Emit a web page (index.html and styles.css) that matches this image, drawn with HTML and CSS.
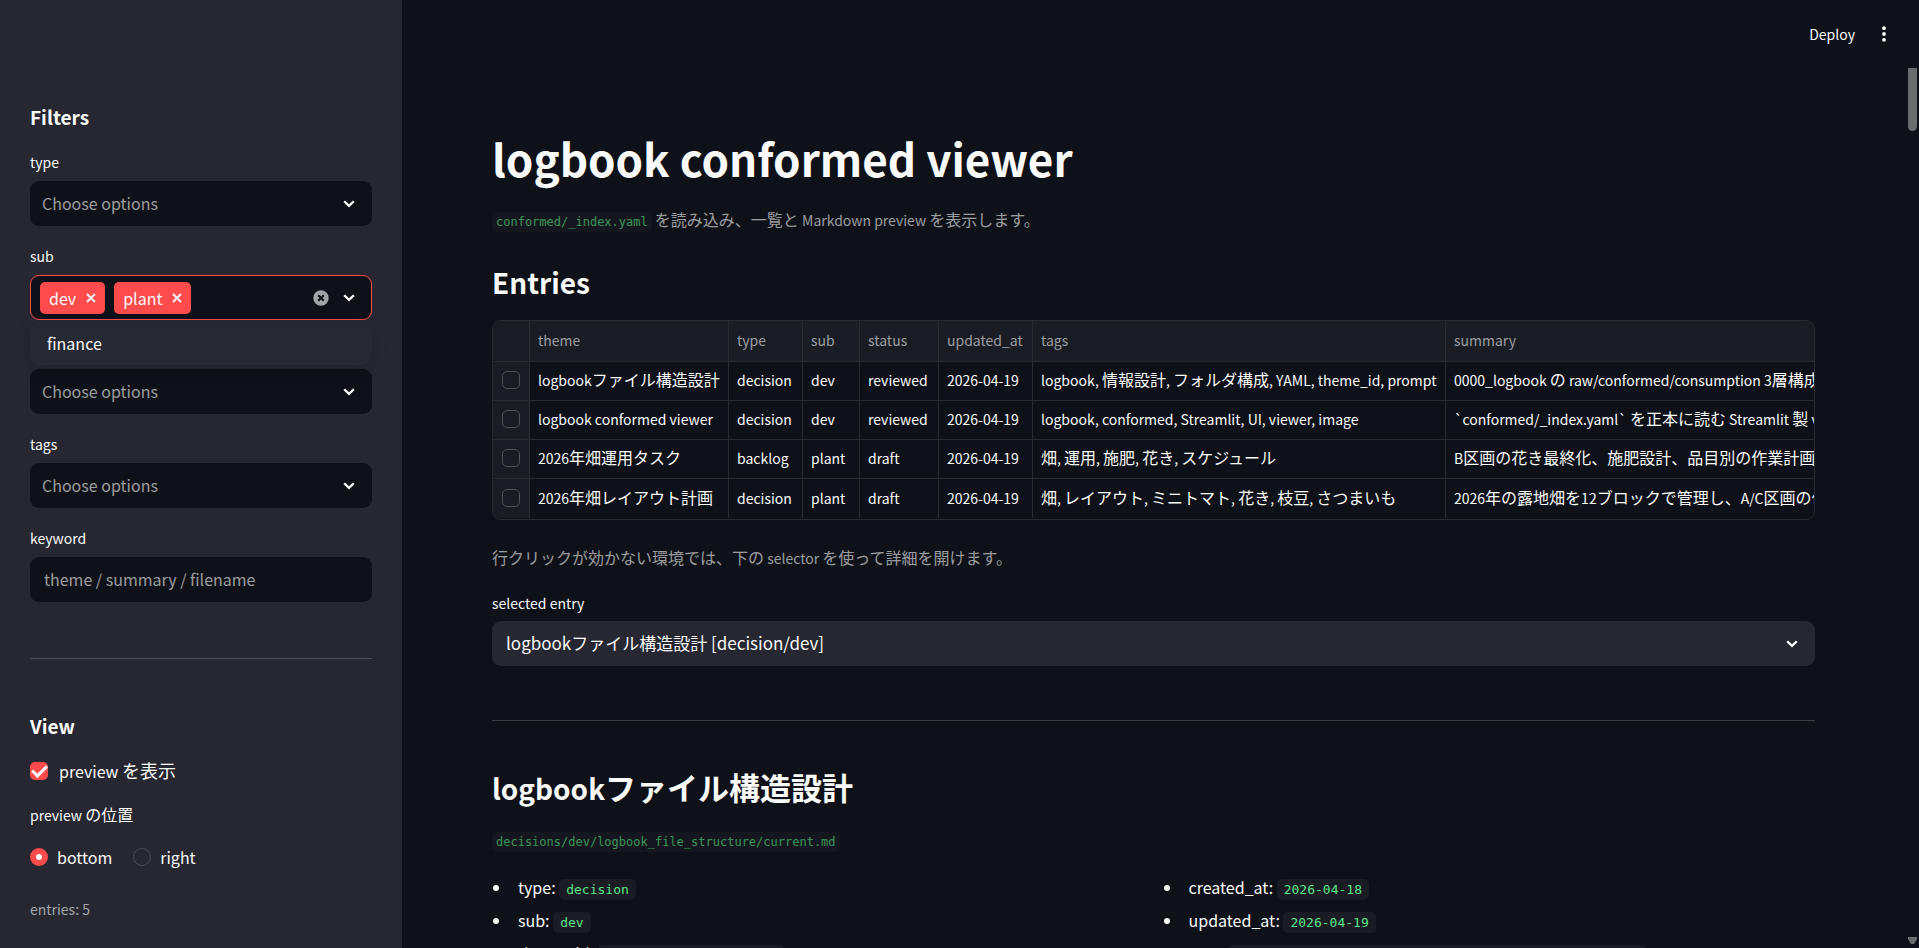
FILE: index.html
```html
<!DOCTYPE html>
<html lang="ja">
<head>
<meta charset="utf-8">
<meta name="viewport" content="width=device-width, initial-scale=1">
<title>logbook conformed viewer</title>
<link rel="stylesheet" href="styles.css">
</head>
<body>
<svg class="defs" aria-hidden="true">
  <symbol id="chevron" viewBox="0 0 12 8"><path d="M1.2 1.2 6 5.9l4.8-4.7" fill="none" stroke="currentColor" stroke-width="2.3"/></symbol>
  <symbol id="cross" viewBox="0 0 10 10"><path d="m1 1 8 8M9 1 1 9" fill="none" stroke="currentColor" stroke-width="1.9"/></symbol>
  <symbol id="clear" viewBox="0 0 16 16"><circle cx="8" cy="8" r="7.7" fill="#a3a4a8"/><path d="m5.2 5.2 5.6 5.6M10.8 5.2l-5.6 5.6" fill="none" stroke="#0e1117" stroke-width="2"/></symbol>
</svg>
<div class="app">
  <aside class="sidebar">
    <h2 class="side-title">Filters</h2>
    <div class="filters">
      <div class="field">
        <label class="label" for="type">type</label>
        <div class="multi">
          <input class="multi-input" id="type" role="combobox" aria-expanded="false" placeholder="Choose options">
          <button class="icon-btn" type="button" aria-label="Open type"><svg class="chevron"><use href="#chevron"/></svg></button>
        </div>
      </div>
      <div class="field">
        <label class="label" for="sub">sub</label>
        <div class="multi multi-open">
          <span class="tag">dev<button class="icon-btn" type="button" aria-label="Remove dev"><svg class="cross"><use href="#cross"/></svg></button></span>
          <span class="tag">plant<button class="icon-btn" type="button" aria-label="Remove plant"><svg class="cross"><use href="#cross"/></svg></button></span>
          <input class="multi-input" id="sub" role="combobox" aria-expanded="true" aria-controls="sub-menu">
          <button class="icon-btn" type="button" aria-label="Clear all"><svg class="clear"><use href="#clear"/></svg></button>
          <button class="icon-btn" type="button" aria-label="Close sub"><svg class="chevron"><use href="#chevron"/></svg></button>
        </div>
        <ul class="menu" id="sub-menu" role="listbox"><li class="menu-item" role="option">finance</li></ul>
      </div>
      <div class="field">
        <label class="label" for="status">status</label>
        <div class="multi">
          <input class="multi-input" id="status" role="combobox" aria-expanded="false" placeholder="Choose options">
          <button class="icon-btn" type="button" aria-label="Open status"><svg class="chevron"><use href="#chevron"/></svg></button>
        </div>
      </div>
      <div class="field">
        <label class="label" for="tags">tags</label>
        <div class="multi">
          <input class="multi-input" id="tags" role="combobox" aria-expanded="false" placeholder="Choose options">
          <button class="icon-btn" type="button" aria-label="Open tags"><svg class="chevron"><use href="#chevron"/></svg></button>
        </div>
      </div>
      <div class="field">
        <label class="label" for="keyword">keyword</label>
        <input class="text-input" id="keyword" type="text" placeholder="theme / summary / filename">
      </div>
    </div>
    <hr class="rule side-rule">
    <h2 class="side-title">View</h2>
    <label class="choice show-preview"><input class="check" type="checkbox" checked><span>preview <span class="ja">を表示</span></span></label>
    <fieldset class="position">
      <legend class="label">preview <span class="ja-small">の位置</span></legend>
      <div class="radios">
        <label class="choice"><input class="radio" type="radio" name="position" checked>bottom</label>
        <label class="choice"><input class="radio" type="radio" name="position">right</label>
      </div>
    </fieldset>
    <p class="caption">entries: 5</p>
  </aside>

  <main class="main">
    <header class="topbar">
      <button class="deploy" type="button">Deploy</button>
      <button class="icon-btn" type="button" aria-label="Main menu"><svg class="dots" viewBox="0 0 4 16"><circle cx="2" cy="2.2" r="1.9"/><circle cx="2" cy="8" r="1.9"/><circle cx="2" cy="13.8" r="1.9"/></svg></button>
    </header>
    <div class="content">
      <h1 class="title">logbook conformed viewer</h1>
      <p class="caption intro"><code class="code-small">conformed/_index.yaml</code> <span class="ja-small">を読み込み、一覧と</span> Markdown preview <span class="ja-small">を表示します。</span></p>
      <h2 class="heading">Entries</h2>
      <div class="table-wrap">
        <table class="entries">
          <colgroup><col class="c-pick"><col class="c-theme"><col class="c-type"><col class="c-sub"><col class="c-status"><col class="c-date"><col class="c-tags"><col></colgroup>
          <thead>
            <tr><th class="pick"></th><th>theme</th><th>type</th><th>sub</th><th>status</th><th>updated_at</th><th>tags</th><th>summary</th></tr>
          </thead>
          <tbody>
            <tr>
              <td class="pick"><input class="row-check" type="checkbox" aria-label="Select row 1"></td>
              <td>logbook<span class="ja-small">ファイル構造設計</span></td><td>decision</td><td>dev</td><td>reviewed</td><td>2026-04-19</td>
              <td>logbook, <span class="ja-small">情報設計</span>, <span class="ja-small">フォルダ構成</span>, YAML, theme_id, prompt</td>
              <td>0000_logbook <span class="ja-small">の</span> raw/conformed/consumption 3<span class="ja-small">層構成</span></td>
            </tr>
            <tr>
              <td class="pick"><input class="row-check" type="checkbox" aria-label="Select row 2"></td>
              <td>logbook conformed viewer</td><td>decision</td><td>dev</td><td>reviewed</td><td>2026-04-19</td>
              <td>logbook, conformed, Streamlit, UI, viewer, image</td>
              <td>`conformed/_index.yaml` <span class="ja-small">を正本に読む</span> Streamlit <span class="ja-small">製</span> viewer</td>
            </tr>
            <tr>
              <td class="pick"><input class="row-check" type="checkbox" aria-label="Select row 3"></td>
              <td>2026<span class="ja-small">年畑運用タスク</span></td><td>backlog</td><td>plant</td><td>draft</td><td>2026-04-19</td>
              <td><span class="ja-small">畑</span>, <span class="ja-small">運用</span>, <span class="ja-small">施肥</span>, <span class="ja-small">花き</span>, <span class="ja-small">スケジュール</span></td>
              <td>B<span class="ja-small">区画の花き最終化、施肥設計、品目別の作業計画を</span></td>
            </tr>
            <tr>
              <td class="pick"><input class="row-check" type="checkbox" aria-label="Select row 4"></td>
              <td>2026<span class="ja-small">年畑レイアウト計画</span></td><td>decision</td><td>plant</td><td>draft</td><td>2026-04-19</td>
              <td><span class="ja-small">畑</span>, <span class="ja-small">レイアウト</span>, <span class="ja-small">ミニトマト</span>, <span class="ja-small">花き</span>, <span class="ja-small">枝豆</span>, <span class="ja-small">さつまいも</span></td>
              <td>2026<span class="ja-small">年の露地畑を</span>12<span class="ja-small">ブロックで管理し、</span>A/C<span class="ja-small">区画の作</span></td>
            </tr>
          </tbody>
        </table>
      </div>
      <p class="caption hint"><span class="ja-small">行クリックが効かない環境では、下の</span> selector <span class="ja-small">を使って詳細を開けます。</span></p>
      <label class="label" for="entry">selected entry</label>
      <div class="select-wrap">
        <select class="select" id="entry"><option>logbookファイル構造設計 [decision/dev]</option></select>
        <svg class="chevron select-arrow" aria-hidden="true"><use href="#chevron"/></svg>
      </div>
      <hr class="rule main-rule">
      <h2 class="heading">logbook<span class="ja-heading">ファイル構造設計</span></h2>
      <p class="caption path"><code class="code-small">decisions/dev/logbook_file_structure/current.md</code></p>
      <div class="meta">
        <ul class="list">
          <li>type: <code class="code">decision</code></li>
          <li>sub: <code class="code">dev</code></li>
          <li>theme_id: <code class="code">logbook_file_structure</code></li>
        </ul>
        <ul class="list">
          <li>created_at: <code class="code">2026-04-18</code></li>
          <li>updated_at: <code class="code">2026-04-19</code></li>
          <li>tags: <code class="code">logbook, 情報設計, フォルダ構成, YAML, theme_id, prompt</code></li>
        </ul>
      </div>
    </div>
    <div class="scrollbar" aria-hidden="true">
      <div class="thumb"></div>
      <svg class="scroll-arrow" viewBox="0 0 9 7"><path d="M0 0h9v2L6 7H3L0 2z"/></svg>
    </div>
  </main>
</div>
</body>
</html>
```
FILE: styles.css
```css
* { box-sizing: border-box; }

:root {
  --bg: #0e1117;
  --panel: #262730;
  --text: #fafafa;
  --muted: rgba(250, 250, 250, 0.6);
  --red: #ff4b4b;
  --line: #292b31;
}

body {
  margin: 0;
  background: var(--bg);
  color: var(--text);
  font-family: "Noto Sans CJK JP", "Noto Sans", sans-serif;
  font-size: 16px;
}

h1, h2, p, ul, fieldset { margin: 0; padding: 0; border: 0; }
ul { list-style: none; }
button, input, select { font: inherit; color: inherit; }

.defs { display: none; }

.app {
  display: grid;
  grid-template-columns: 402px minmax(0, 1fr);
  height: 100vh;
  overflow: hidden;
}

/* text helpers: kana and kanji run slightly larger than the latin text */
.ja, .ja-small, .ja-heading { line-height: 1; }
.ja { font-size: 18px; }
.ja-small { font-size: 16px; }
.ja-heading { font-size: 31px; }

.label {
  display: block;
  padding: 0;
  font-size: 14px;
  line-height: 24px;
}

.caption {
  color: var(--muted);
  font-size: 14px;
  line-height: 25px;
}

.rule {
  height: 1px;
  margin: 0;
  border: 0;
  background: #3a3c41;
}

.icon-btn {
  display: flex;
  flex: none;
  padding: 0;
  border: 0;
  background: none;
}

.chevron { width: 12px; height: 8px; }
.cross { width: 10px; height: 10px; }
.clear { width: 16px; height: 16px; }

/* sidebar */
.sidebar {
  padding: 103px 30px 0;
  background: var(--panel);
  overflow: hidden;
}

.side-title {
  font-size: 19px;
  font-weight: 700;
  line-height: 28px;
}

.filters {
  display: grid;
  grid-template-columns: minmax(0, 1fr);
  gap: 18px;
  margin-top: 19px;
}

.field {
  position: relative;
  display: grid;
  grid-template-columns: minmax(0, 1fr);
  gap: 7px;
}

.multi {
  display: flex;
  align-items: center;
  gap: 9px;
  height: 45px;
  padding: 0 17px 0 12px;
  border-radius: 9px;
  background: var(--bg);
}

.multi-open {
  padding: 0 16px 0 9px;
  border: 1px solid var(--red);
}

.multi-open .clear { margin-right: 5px; }

.multi-input {
  flex: 1;
  min-width: 0;
  padding: 0 0 2px;
  border: 0;
  outline: 0;
  background: none;
}

.multi-input::placeholder,
.text-input::placeholder { color: var(--muted); opacity: 1; }

.tag {
  display: flex;
  align-items: center;
  gap: 10px;
  height: 32px;
  padding: 0 9px;
  border-radius: 5px;
  background: var(--red);
  line-height: 30px;
}

.menu {
  position: absolute;
  top: 100%;
  right: 0;
  left: 0;
  z-index: 1;
  margin-top: 2px;
  border-radius: 9px;
  background: #262931;
  box-shadow: 0 4px 16px rgba(0, 0, 0, 0.16);
}

.menu-item { padding: 0 17px; line-height: 43px; }

.text-input {
  width: 100%;
  height: 45px;
  padding: 0 14px 2px;
  border: 0;
  border-radius: 9px;
  background: var(--bg);
}

.side-rule { margin: 56px 0 53px; background: #4c4d55; }

.choice {
  display: flex;
  align-items: center;
  line-height: 26px;
}

.show-preview { gap: 11px; margin-top: 18px; }

.check, .radio, .row-check {
  flex: none;
  appearance: none;
  width: 18px;
  height: 18px;
  margin: 0;
  border: 1px solid #4b4c54;
}

.check { border-radius: 5px; }

.check:checked {
  border: 0;
  background: var(--red);
  display: grid;
  place-items: center;
}

.check:checked::before {
  content: "";
  width: 12px;
  height: 6px;
  margin-bottom: 4px;
  border: solid var(--text);
  border-width: 0 0 3px 3px;
  transform: rotate(-45deg);
}

.radio { border-radius: 50%; }
.radio:checked { border: 6px solid var(--red); background: var(--text); }

.position { margin-top: 19px; }
.radios { display: flex; gap: 21px; margin-top: 17px; }
.radios .choice { gap: 9px; }
.sidebar .caption { margin-top: 27px; }

/* main area */
.main {
  position: relative;
  min-width: 0;
  overflow: hidden;
}

.topbar {
  position: absolute;
  top: 0;
  right: 0;
  left: 0;
  display: flex;
  align-items: center;
  justify-content: flex-end;
  gap: 27px;
  height: 67px;
  padding-right: 33px;
}

.deploy {
  padding: 0;
  border: 0;
  background: none;
  font-size: 14px;
}

.dots { width: 4px; height: 16px; fill: var(--text); }

.content { padding: 128px 104px 0 90px; }

.title {
  font-size: 44px;
  font-weight: 700;
  line-height: 60px;
}

.intro { margin-top: 20px; }

.heading {
  font-size: 28px;
  font-weight: 700;
  line-height: 38px;
}

.intro + .heading { margin-top: 30px; }

.code, .code-small {
  border-radius: 5px;
  background: #1a1c24;
  color: #5ce488;
  font-family: "DejaVu Sans Mono", "Noto Sans Mono CJK JP", monospace;
  line-height: 1;
}

.code { padding: 3px 7px; font-size: 13px; }

.code-small {
  padding: 3px 4px;
  font-size: 12px;
  opacity: 0.6;
}

.table-wrap {
  margin-top: 19px;
  padding-bottom: 1px;
  border: 1px solid var(--line);
  border-radius: 9px;
  overflow: hidden;
}

.entries {
  width: 100%;
  table-layout: fixed;
  border-collapse: separate;
  border-spacing: 0;
  font-size: 14px;
}

.c-pick { width: 37px; }
.c-theme { width: 199px; }
.c-type { width: 74px; }
.c-sub { width: 57px; }
.c-status { width: 79px; }
.c-date { width: 94px; }
.c-tags { width: 413px; }

.entries th, .entries td {
  height: 39px;
  padding: 0 0 2px 8px;
  border-right: 1px solid var(--line);
  border-bottom: 1px solid var(--line);
  line-height: 24px;
  text-align: left;
  white-space: nowrap;
  overflow: hidden;
}

.entries th {
  height: 41px;
  background: #1a1c23;
  color: #9b9ca1;
  font-weight: 400;
}

.entries th:last-child, .entries td:last-child { border-right: 0; }
.entries tr:last-child td { border-bottom: 0; }
.entries .pick { padding-left: 9px; background: #1a1c23; }
.row-check { display: block; border-radius: 5px; border-color: #505157; }

.hint { margin: 26px 0 20px; }

.select-wrap {
  position: relative;
  margin-top: 6px;
}

.select {
  display: block;
  appearance: none;
  width: 100%;
  height: 45px;
  padding: 0 40px 2px 14px;
  border: 0;
  border-radius: 9px;
  background: var(--panel);
  font-size: 17px;
}

.select-arrow {
  position: absolute;
  top: 19px;
  right: 17px;
  pointer-events: none;
}

.main-rule { margin: 54px 0 48px; }
.path { margin-top: 21px; }

.meta {
  display: grid;
  grid-template-columns: minmax(0, 1fr) minmax(0, 1fr);
  gap: 18px;
  margin-top: 18px;
}

.list { line-height: 33px; white-space: nowrap; }

.list li::before {
  content: "";
  display: inline-block;
  width: 6px;
  height: 6px;
  margin: 0 19px 3px 1px;
  border-radius: 50%;
  background: var(--text);
}

.scrollbar {
  position: absolute;
  top: 68px;
  right: 2px;
  bottom: 4px;
  display: flex;
  flex-direction: column;
  justify-content: space-between;
  width: 9px;
}

.thumb {
  height: 63px;
  border-radius: 0 0 5px 5px;
  background: #6b6c70;
}

.scroll-arrow { width: 9px; height: 7px; fill: #6b6c70; }
```
